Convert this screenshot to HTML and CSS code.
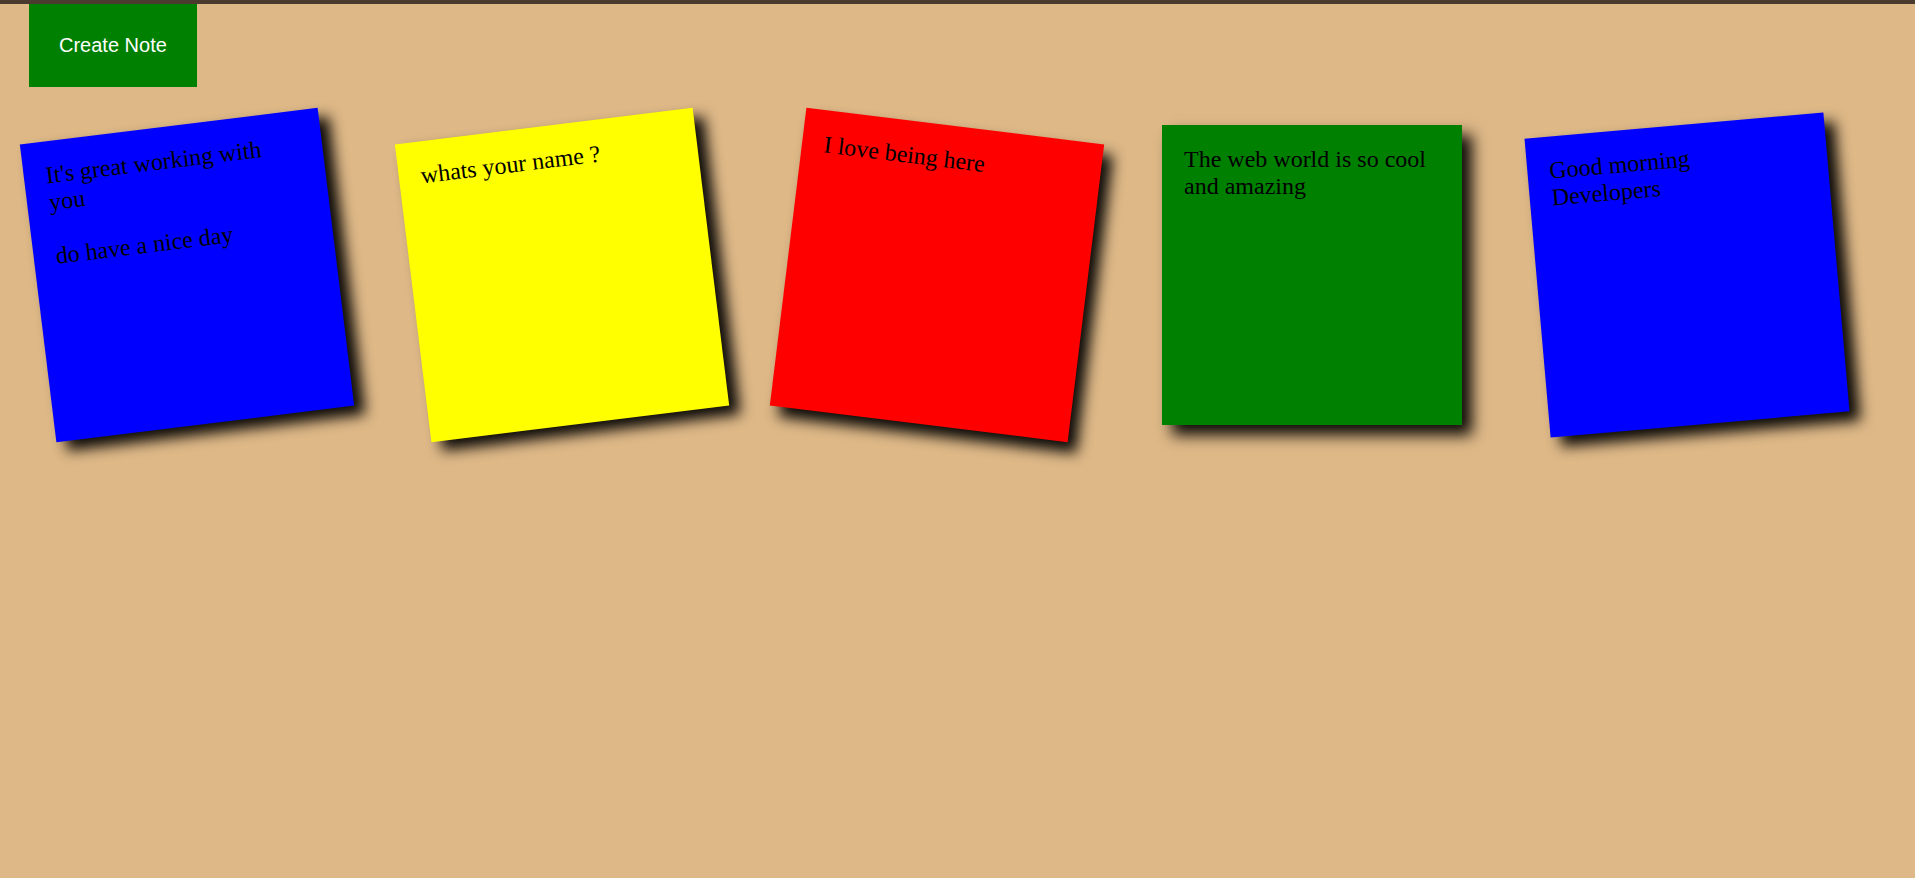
FILE: index.html
```html
<!DOCTYPE html>
<html lang="en">
<head>
<meta charset="utf-8">
<title>Sticky Notes</title>
<link rel="stylesheet" href="styles.css">
</head>
<body>
  <div class="toolbar">
    <button class="create-btn" type="button">Create Note</button>
  </div>
  <div class="board">
    <div class="note note-blue tilt-left">It's great working with you<br><br>do have a nice day</div>
    <div class="note note-yellow tilt-left">whats your name ?</div>
    <div class="note note-red tilt-right">I love being here</div>
    <div class="note note-green">The web world is so cool and amazing</div>
    <div class="note note-blue tilt-slight">Good morning Developers</div>
  </div>
</body>
</html>
```

FILE: styles.css
```css
html, body {
  margin: 0;
  padding: 0;
}

body {
  background: #deb887;
  border-top: 4px solid #4b3b2e;
  min-height: 874px;
  overflow: hidden;
  font-family: "Liberation Serif", "Times New Roman", serif;
}

.toolbar {
  display: flex;
  padding-left: 29px;
}

.create-btn {
  background: #008000;
  color: #ffffff;
  border: none;
  padding: 30px;
  font-family: "Liberation Sans", Arial, sans-serif;
  font-size: 20px;
  line-height: 23px;
  cursor: pointer;
}

.board {
  display: flex;
  gap: 75px;
  padding-left: 37px;
  margin-top: 38px;
}

.note {
  flex: 0 0 auto;
  width: 300px;
  height: 300px;
  box-sizing: border-box;
  padding: 21px 24px 21px 22px;
  font-size: 24px;
  color: #000000;
  box-shadow: 10px 10px 14px rgba(0, 0, 0, 0.95);
}

.note-blue { background: #0000ff; }
.note-yellow { background: #ffff00; }
.note-red { background: #ff0000; }
.note-green { background: #008000; }

.tilt-left { transform: rotate(-7deg); }
.tilt-right { transform: rotate(7deg); }
.tilt-slight { transform: rotate(-5deg); }
```
